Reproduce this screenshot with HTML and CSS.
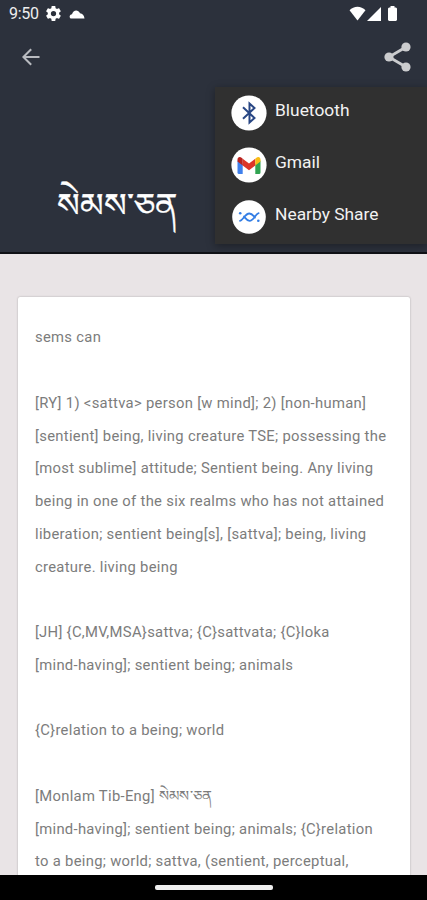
FILE: index.html
```html
<!DOCTYPE html>
<html lang="en">
<head>
    <meta charset="utf-8">
    <meta name="viewport" content="width=device-width, initial-scale=1">
    <title>Dictionary entry</title>
    <link rel="stylesheet" href="styles.css">
</head>
<body>

<div class="screen">

    <header class="header">
        <!-- status bar -->
        <div class="status">
            <span class="status-time">9:50</span>
            <svg class="status-gear" viewBox="2 2 20 20"><path fill="#fff" d="M19.4 13c0-.3.1-.6.1-1s0-.7-.1-1l2.1-1.6c.2-.2.2-.4.1-.6l-2-3.5c-.1-.2-.4-.3-.6-.2l-2.5 1c-.5-.4-1.1-.7-1.7-1l-.4-2.6c0-.3-.2-.5-.4-.5h-4c-.2 0-.5.2-.5.5l-.4 2.6c-.6.3-1.2.6-1.7 1l-2.5-1c-.2-.1-.5 0-.6.2l-2 3.5c-.1.2-.1.4.1.6L4.5 11c0 .3-.1.6-.1 1s0 .7.1 1l-2.1 1.6c-.2.2-.2.4-.1.6l2 3.5c.1.2.4.3.6.2l2.5-1c.5.4 1.1.7 1.7 1l.4 2.6c0 .3.3.5.5.5h4c.2 0 .4-.2.4-.5l.4-2.6c.6-.3 1.2-.6 1.7-1l2.5 1c.2.1.5 0 .6-.2l2-3.5c.1-.2.1-.4-.1-.6zM12 15.5a3.500 3.500 0 1 1 0-7 3.500 3.500 0 0 1 0 7z"/></svg>
            <svg class="status-cloud" viewBox="0 0 16 10"><path fill="#fff" d="M2.500 9.500C0 9.500 0 5.500 3 5.200 4 1 9 0 11 4.200c2.500.3 4 2 4.500 5.300z"/></svg>
            <span class="status-space"></span>
            <svg class="status-wifi" viewBox="0 0 18 16"><path fill="#fff" d="M9 15.500.5 4.500C5-.5 13-.5 17.500 4.500z"/></svg>
            <svg class="status-signal" viewBox="0 0 14 14"><path fill="#fff" d="M14 0v14H0z"/></svg>
            <svg class="status-battery" viewBox="0 0 9 15"><path fill="#fff" d="M2.500 0h4v1.500H8l1 1V14l-1 1H1l-1-1V2.500l1-1h1.500z"/></svg>
        </div>

        <!-- toolbar -->
        <div class="toolbar">
            <svg class="back" viewBox="0 0 18 18"><path fill="none" stroke="#b9bbc0" stroke-width="2" d="M17.500 9H1.500M9.200 1.200 1.400 9l7.800 7.800"/></svg>
            <svg class="share" viewBox="0 0 27 30"><g fill="#cbccce"><circle cx="5" cy="15" r="4.600"/><circle cx="22" cy="5" r="4.600"/><circle cx="22" cy="25" r="4.600"/></g><path fill="none" stroke="#cbccce" stroke-width="2.800" d="M22 5 5 15l17 10"/></svg>
        </div>

        <h1 class="word" lang="bo">སེམས་ཅན</h1>

        <!-- share menu -->
        <div class="menu">
            <div class="menu-item">
                <svg class="menu-icon" viewBox="0 0 36 36"><circle cx="18" cy="18" r="17.600" fill="#fff"/><path fill="none" stroke="#294784" stroke-width="2" d="M12 12.300 23.500 23 18.500 27.500V8.500L23.500 13 12 23.700"/></svg>
                <span>Bluetooth</span>
            </div>
            <div class="menu-item">
                <svg class="menu-icon" viewBox="0 0 36 36"><circle cx="18" cy="18" r="17.600" fill="#fff"/><path fill="#3f80ec" d="M6.500 13.500 11.700 17v10H8a1.500 1.500 0 0 1-1.500-1.500z"/><path fill="#31a451" d="M29.500 13.500 24.300 17v10H28a1.500 1.500 0 0 0 1.500-1.500z"/><path fill="#dc3528" d="m11.700 11.700 6.300 4.800 6.300-4.800v6.800L18 23.300l-6.300-4.800z"/><path fill="#b9231f" d="M6.500 12.500c0-3 2.800-3.300 4.400-1.500l.8.700v6.800l-5.200-4z"/><path fill="#f8bc15" d="M29.500 12.500c0-3-2.800-3.300-4.400-1.500l-.8.700v6.800l5.200-4z"/></svg>
                <span>Gmail</span>
            </div>
            <div class="menu-item">
                <svg class="menu-icon" viewBox="0 0 36 36"><circle cx="18" cy="18" r="16.800" fill="#fff"/><g fill="none" stroke="#347ee5" stroke-width="1.800" stroke-linecap="round"><path d="M9 21.800c3.200-.4 5-7.300 9.300-7.300 2.800 0 4 2.200 5.700 4M13 17.500c1.700 2 2.800 4.300 5.600 4.300 4.200 0 5.700-7 9-7.600"/></g><g fill="#347ee5"><circle cx="9.200" cy="14.300" r="1.300"/><circle cx="27.300" cy="21.700" r="1.300"/></g></svg>
                <span>Nearby Share</span>
            </div>
        </div>
    </header>

    <main class="content">
        <div class="card">
            <p>sems can</p>
            <p>[RY] 1) &lt;sattva&gt; person [w mind]; 2) [non-human]<br>
            [sentient] being, living creature TSE; possessing the<br>
            [most sublime] attitude; Sentient being. Any living<br>
            being in one of the six realms who has not attained<br>
            liberation; sentient being[s], [sattva]; being, living<br>
            creature. living being</p>
            <p>[JH] {C,MV,MSA}sattva; {C}sattvata; {C}loka<br>
            [mind-having]; sentient being; animals</p>
            <p>{C}relation to a being; world</p>
            <p>[Monlam Tib-Eng] <span class="tib" lang="bo">སེམས་ཅན</span><br>
            [mind-having]; sentient being; animals; {C}relation<br>
            to a being; world; sattva, (sentient, perceptual,</p>
        </div>
    </main>

    <footer class="navbar"><span class="pill"></span></footer>
</div>

</body>
</html>
```
FILE: styles.css
```css
* { box-sizing: border-box; }

body {
    margin: 0;
    font-family: Roboto, "Liberation Sans", sans-serif;
}

.screen {
    display: flex;
    flex-direction: column;
    width: 427px;
    height: 900px;
    overflow: hidden;
    background: #e9e4e6;
}

svg { display: block; flex: none; }

/* header */
.header {
    position: relative;
    flex: none;
    height: 254px;
    background: #2c313c;
    border-bottom: 2px solid #101116;
}

.status {
    display: flex;
    align-items: center;
    height: 27px;
    padding: 0 29px 0 9px;
}
.status-time { width: 37px; font-size: 16px; color: #eee; letter-spacing: -.3px; }
.status-gear { width: 15px; height: 15px; }
.status-cloud { width: 16px; height: 10px; margin-left: 8px; }
.status-space { flex: 1; }
.status-wifi { width: 17px; height: 15px; }
.status-signal { width: 14px; height: 14px; margin-left: 1px; }
.status-battery { width: 9px; height: 15px; margin: 0 1px 0 7px; }

.toolbar {
    display: flex;
    justify-content: space-between;
    align-items: center;
    height: 60px;
    padding: 0 16px 0 22px;
}
.back { width: 18px; height: 18px; }
.share { width: 27px; height: 30px; }

.word {
    margin: 94px 0 0 57px;
    font-size: 33.6px;
    line-height: 50px;
    font-weight: normal;
    color: #fff;
    -webkit-text-stroke: .3px #fff;
    white-space: nowrap;
}

/* share popup */
.menu {
    position: absolute;
    top: 87px;
    right: 0;
    width: 212px;
    height: 157px;
    background: #303030;
    box-shadow: 0 2px 8px rgba(0, 0, 0, .35);
}
.menu-item {
    display: flex;
    gap: 8px;
    height: 52px;
    padding: 8px 0 0 16px;
    font-size: 17.4px;
    line-height: 30px;
    color: #f2f2f2;
    white-space: nowrap;
}
.menu-icon { width: 36px; height: 36px; }

/* entry text */
.content {
    flex: 1;
    min-height: 0;
    padding: 43px 17px 0 18px;
    overflow: hidden;
}
.card {
    height: 700px;
    padding: 24.4px 0 0 17px;
    border-radius: 2px;
    background: #fff;
    box-shadow: 0 0 2px rgba(0, 0, 0, .3);
    font-size: 14.8px;
    line-height: 32.75px;
    letter-spacing: .3px;
    color: #7c7c7c;
    white-space: nowrap;
}
.card p { margin: 0 0 32.75px; }
.tib { display: inline-block; height: 32px; vertical-align: top; }

/* gesture bar */
.navbar {
    display: flex;
    justify-content: center;
    flex: none;
    height: 25px;
    padding-top: 10px;
    background: #000;
}
.pill { width: 118px; height: 5px; border-radius: 2px; background: #eee; }
```
